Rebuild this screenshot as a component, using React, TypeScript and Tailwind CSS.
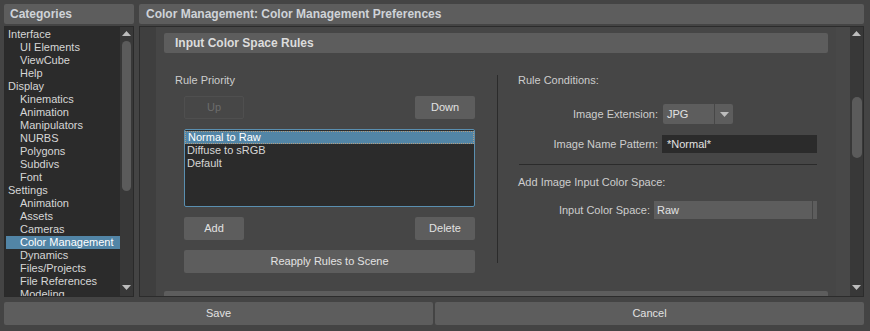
const categories: { label: string; child?: boolean; selected?: boolean }[] = [
  { label: "Interface" },
  { label: "UI Elements", child: true },
  { label: "ViewCube", child: true },
  { label: "Help", child: true },
  { label: "Display" },
  { label: "Kinematics", child: true },
  { label: "Animation", child: true },
  { label: "Manipulators", child: true },
  { label: "NURBS", child: true },
  { label: "Polygons", child: true },
  { label: "Subdivs", child: true },
  { label: "Font", child: true },
  { label: "Settings" },
  { label: "Animation", child: true },
  { label: "Assets", child: true },
  { label: "Cameras", child: true },
  { label: "Color Management", child: true, selected: true },
  { label: "Dynamics", child: true },
  { label: "Files/Projects", child: true },
  { label: "File References", child: true },
  { label: "Modeling", child: true },
];

const rules = ["Normal to Raw", "Diffuse to sRGB", "Default"];

const ArrowUp = () => (
  <svg width="9" height="5" viewBox="0 0 9 5" className="block">
    <path d="M0 5 L4.5 0 L9 5 Z" fill="#bdbdbd" />
  </svg>
);

const ArrowDown = () => (
  <svg width="9" height="5" viewBox="0 0 9 5" className="block">
    <path d="M0 0 L9 0 L4.5 5 Z" fill="#bdbdbd" />
  </svg>
);

const Button = ({ label, className = "", disabled = false }: { label: string; className?: string; disabled?: boolean }) => (
  <div
    className={
      "h-[23px] flex items-center justify-center rounded-[2px] " +
      (disabled
        ? "bg-[#474747] border border-[#4f4f4f] text-[#6c6c6c] "
        : "bg-[#5d5d5d] text-[#e2e2e2] ") +
      className
    }
  >
    {label}
  </div>
);

const App = () => {
  return (
    <div
      className="w-[870px] h-[331px] bg-[#444444] pt-[4px] pl-[4px] pr-[6px] pb-[6px] flex flex-col gap-[5px] text-[11px] leading-[13px] text-[#cdcdcd] overflow-hidden"
      style={{ fontFamily: '"Liberation Sans", Arial, sans-serif' }}
    >
      <div className="h-[293px] flex gap-[5px]">
        {/* categories */}
        <div className="w-[130px] flex flex-col gap-[2px]">
          <div className="h-[20px] bg-[#5d5d5d] rounded-[2px] flex items-center pl-[6px] font-bold text-[12px] text-[#cfd3d8]">
            Categories
          </div>
          <div className="flex-1 border border-[#2a2a2a] bg-[#2b2b2b] flex overflow-hidden">
            <div className="flex-1 pt-[1px] pl-[1px] overflow-hidden">
              {categories.map((c, i) => (
                <div
                  key={i}
                  className={
                    "h-[13px] whitespace-nowrap " +
                    (c.child ? "pl-[14px] " : "pl-[2px] ") +
                    (c.selected ? "bg-[#5285a6] text-white" : "text-[#d6d6d6]")
                  }
                >
                  {c.label}
                </div>
              ))}
            </div>
            <div className="w-[13px] bg-[#383838] flex flex-col items-center pt-[4px] pb-[6px]">
              <ArrowUp />
              <div className="mt-[5px] w-[9px] h-[150px] rounded-full bg-[#5b5b5b]" />
              <div className="flex-1" />
              <ArrowDown />
            </div>
          </div>
        </div>

        {/* preferences */}
        <div className="flex-1 flex flex-col gap-[2px]">
          <div className="h-[20px] bg-[#5d5d5d] rounded-[2px] flex items-center pl-[7px] font-bold text-[12px] text-[#cfd3d8]">
            Color Management: Color Management Preferences
          </div>
          <div className="flex-1 border border-[#2c2c2c] flex overflow-hidden">
            <div className="w-[16px] bg-[#3f3f3f]" />
            <div className="flex-1 bg-[#464646] px-[8px] pt-[6px] flex flex-col overflow-hidden">
              <div className="h-[20px] shrink-0 bg-[#5d5d5d] rounded-[2px] flex items-center pl-[11px] font-bold text-[12px] text-[#dcdcdc]">
                Input Color Space Rules
              </div>
              <div className="h-[232px] shrink-0 flex">
                {/* left column */}
                <div className="w-[333px] pl-[11px] flex flex-col">
                  <div className="mt-[21px] h-[13px]">Rule Priority</div>
                  <div className="mt-[9px] ml-[9px] w-[291px] flex justify-between">
                    <Button label="Up" disabled className="w-[60px]" />
                    <Button label="Down" className="w-[60px]" />
                  </div>
                  <div className="mt-[10px] ml-[9px] w-[291px] h-[78px] border border-[#5a8fb0] rounded-[2px] bg-[#2b2b2b] pt-[1px]">
                    {rules.map((r, i) => (
                      <div
                        key={r}
                        className={
                          "h-[13px] pl-[2px] whitespace-nowrap " +
                          (i === 0
                            ? "bg-[#5285a6] text-white border border-dotted border-[#b49c7e] pl-[1px] leading-[11px]"
                            : "text-[#d6d6d6]")
                        }
                      >
                        {r}
                      </div>
                    ))}
                  </div>
                  <div className="mt-[10px] ml-[9px] w-[291px] flex justify-between">
                    <Button label="Add" className="w-[60px]" />
                    <Button label="Delete" className="w-[60px]" />
                  </div>
                  <Button label="Reapply Rules to Scene" className="mt-[10px] ml-[9px] w-[291px]" />
                </div>

                <div className="w-px mt-[22px] h-[188px] bg-[#2b2b2b]" />

                {/* right column */}
                <div className="flex-1 pl-[20px] flex flex-col">
                  <div className="mt-[21px] h-[13px]">Rule Conditions:</div>
                  <div className="mt-[17px] h-[20px] flex items-center">
                    <div className="w-[140px] text-right">Image Extension:</div>
                    <div className="ml-[5px] w-[70px] h-[20px] bg-[#5d5d5d] rounded-[2px] flex">
                      <div className="flex-1 pl-[4px] flex items-center text-[#e2e2e2]">JPG</div>
                      <div className="w-px bg-[#474747]" />
                      <div className="w-[18px] flex items-center justify-center">
                        <ArrowDown />
                      </div>
                    </div>
                  </div>
                  <div className="mt-[11px] h-[18px] flex items-center">
                    <div className="w-[140px] text-right">Image Name Pattern:</div>
                    <div className="ml-[4px] w-[155px] h-[18px] bg-[#2b2b2b] pl-[5px] flex items-center text-[#e2e2e2]">
                      *Normal*
                    </div>
                  </div>
                  <div className="mt-[11px] ml-[1px] w-[298px] h-px bg-[#2b2b2b]" />
                  <div className="mt-[11px] h-[13px]">Add Image Input Color Space:</div>
                  <div className="mt-[12px] h-[18px] flex items-center">
                    <div className="w-[132px] text-right">Input Color Space:</div>
                    <div className="ml-[4px] w-[163px] h-[18px] bg-[#5d5d5d] flex">
                      <div className="flex-1 pl-[3px] flex items-center text-[#e2e2e2]">Raw</div>
                      <div className="w-px bg-[#474747]" />
                      <div className="w-[4px]" />
                    </div>
                  </div>
                </div>
              </div>
              <div className="mt-[6px] h-[20px] shrink-0 bg-[#5d5d5d] rounded-[2px]" />
            </div>
            <div className="w-[14px] bg-[#484848]" />
            <div className="w-[13px] bg-[#383838] flex flex-col items-center pt-[4px] pb-[6px]">
              <ArrowUp />
              <div className="mt-[61px] w-[10px] h-[61px] rounded-full bg-[#5b5b5b]" />
              <div className="flex-1" />
              <ArrowDown />
            </div>
          </div>
        </div>
      </div>

      <div className="h-[23px] flex gap-[2px]">
        <Button label="Save" className="flex-1" />
        <Button label="Cancel" className="flex-1" />
      </div>
    </div>
  );
};

export default App;
